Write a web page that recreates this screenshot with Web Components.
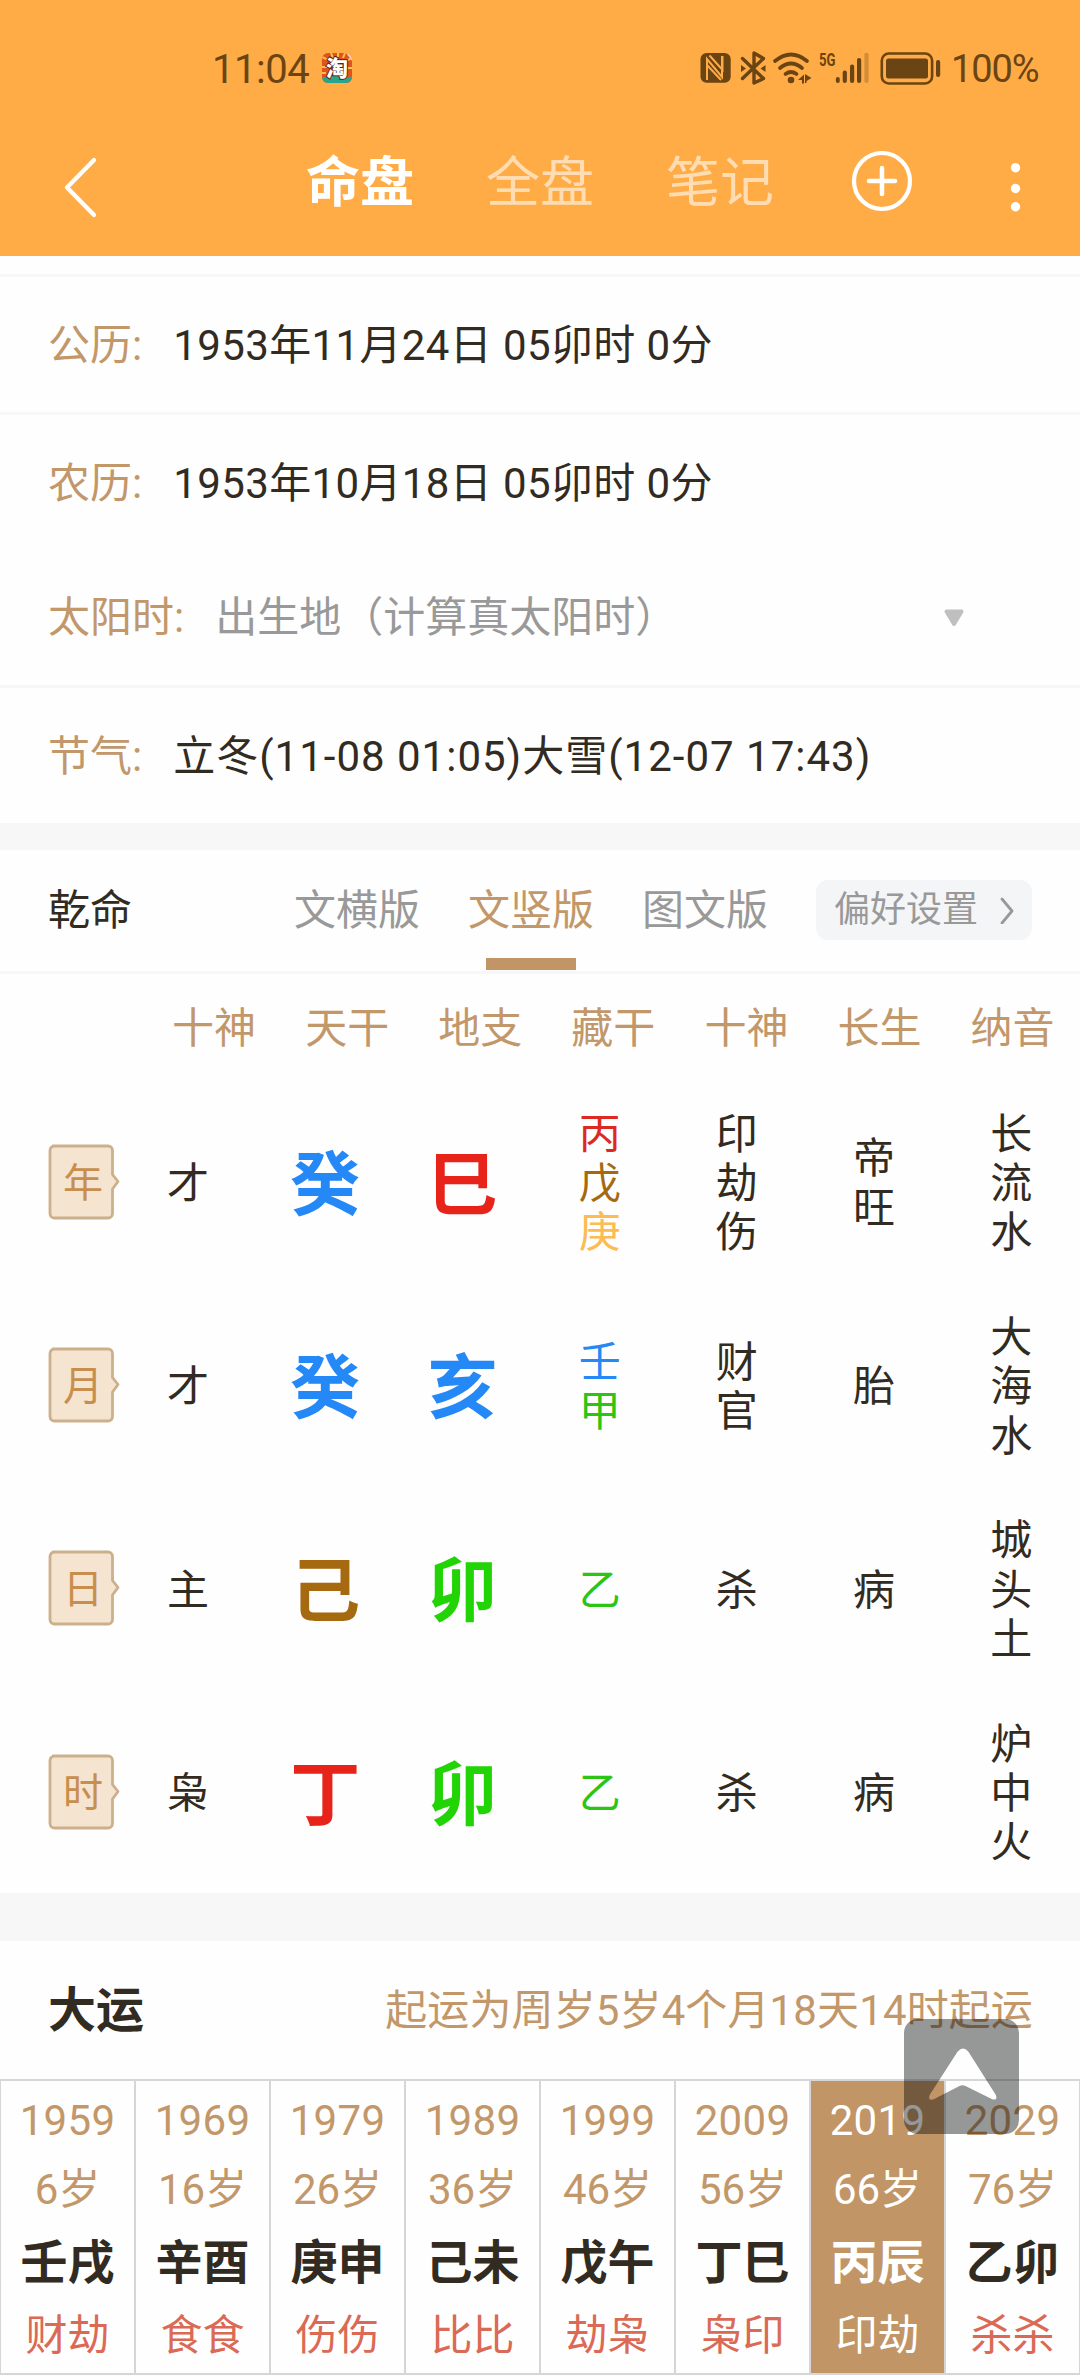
<!DOCTYPE html>
<html lang="zh-CN">
<head>
<meta charset="utf-8">
<title>命盘</title>
<style>
  html, body { margin: 0; padding: 0; }
  body {
    width: 1080px; height: 2376px; overflow: hidden; background: #fefefe;
    font-family: Roboto, "Noto Sans CJK SC", sans-serif; font-size: 42px; line-height: 50px;
    color: #322b22;
    --brown: #c2976a; --grey: #999;
  }
</style>
</head>
<body>
<chart-page></chart-page>

<script>
const define = (name, html, setup) => {
  const template = document.createElement('template');
  template.innerHTML = html;
  customElements.define(name, class extends HTMLElement {
    constructor() {
      super();
      this.attachShadow({ mode: 'open' }).append(template.content.cloneNode(true));
    }
    connectedCallback() { if (setup) setup(this, this.shadowRoot); }
  });
};

define('status-bar', `
<style>
  :host { display: flex; height: 112px; box-sizing: border-box; padding: 44px 42px 0 212px; align-items: flex-start; color: #6b4413; }
  .time { font-size: 40px; line-height: 51px; letter-spacing: -.5px; width: 110px; }
  .app { width: 30px; height: 30px; margin-top: 9px; overflow: visible; }
  .icons { margin-left: auto; width: 242px; height: 42px; margin-top: 4px; margin-right: 9px; overflow: visible; }
  .pct { font-size: 38px; line-height: 51px; letter-spacing: -1.1px; width: 87px; white-space: nowrap; }
</style>
<span class="time">11:04</span>
<svg class="app" viewBox="0 0 30 30">
  <defs><clipPath id="c"><rect width="30" height="30" rx="6"/></clipPath></defs>
  <g clip-path="url(#c)">
    <rect width="30" height="30" fill="#e2521f"/>
    <path d="M0 4l6 3M9 0l2 5M16 0v5M23 0l-2 5M30 5l-6 3M0 14h5M30 15h-5M0 20h4" stroke="#ffc04a" stroke-width="2"/>
    <path d="M24 0l6 8V0z" fill="#f7c7b0"/>
    <path d="M0 25q7-5 15-2t15 0v7H0z" fill="#2aa58d"/>
  </g>
  <text x="15" y="22.5" text-anchor="middle" font-size="22" font-weight="900" font-family="Noto Sans CJK SC" fill="#fff" stroke="#5a2410" stroke-width="2" paint-order="stroke">淘</text>
</svg>
<svg class="icons" viewBox="699 48 242 42" fill="#6b4413">
  <rect x="699.5" y="53" width="30.2" height="29.8" rx="6"/>
  <path d="M706 80V59l15 18V56M708.5 55.500l13 14.500V56M706 65l14 15" stroke="#ffac47" stroke-width="2" fill="none"/>
  <path d="M741.500 58.500l21 20L753 83V53l9.500 5.500-21 20" fill="none" stroke="#6b4413" stroke-width="3.400" stroke-linejoin="round" stroke-linecap="round"/>
  <path d="M740 65l5 3.500-5 3.500zM764.500 65l-5 3.500 5 3.500z"/>
  <g fill="none" stroke="#6b4413" stroke-width="3.700" stroke-linecap="round">
    <path d="M774 61q16-13 32 0"/><path d="M779 68q11-9 22 0"/><path d="M784.500 74q5.500-4 11 0"/>
  </g>
  <circle cx="790" cy="80" r="3.300"/>
  <path d="M797 80l6-5.500v9h-2V80zM804 74v9h1.500v-2l5-3z"/>
  <text x="818" y="66.300" font-size="18" font-weight="700" font-family="Roboto" textLength="16.500" lengthAdjust="spacingAndGlyphs">5G</text>
  <rect x="834.800" y="77" width="4" height="6" rx="2"/><rect x="841.700" y="70.500" width="4.200" height="12.500" rx="2"/>
  <rect x="849" y="64.500" width="4.200" height="18.500" rx="2"/><rect x="856" y="58" width="4.200" height="25" rx="2"/>
  <rect x="863.400" y="52.800" width="4.200" height="30.200" rx="2" opacity=".3"/>
  <rect x="880.800" y="53.500" width="50.300" height="30" rx="7" fill="none" stroke="#6b4413" stroke-width="2.600"/>
  <rect x="885" y="58.500" width="42" height="20" rx="2.500"/>
  <rect x="935" y="60" width="4.200" height="17" rx="2"/>
</svg>
<span class="pct">100%</span>`);

define('nav-bar', `
<style>
  :host { display: flex; height: 144px; align-items: center; color: #fff; }
  .back { width: 270px; height: 144px; }
  nav { display: flex; width: 540px; font-size: 54px; line-height: 148px; }
  nav span { width: 180px; text-align: center; color: rgba(255,255,255,.58); }
  nav .on { color: #fff; font-weight: 700; }
  .tools { width: 270px; height: 144px; }
</style>
<svg class="back" viewBox="0 112 270 144"><path d="M94 160L67 187.500 94 215" fill="none" stroke="#fff" stroke-width="4.300" stroke-linecap="round" stroke-linejoin="round"/></svg>
<nav><span class="on">命盘</span><span>全盘</span><span>笔记</span></nav>
<svg class="tools" viewBox="810 112 270 144" fill="#fff">
  <circle cx="882" cy="181" r="28" fill="none" stroke="#fff" stroke-width="4.200"/>
  <path d="M869 181h26M882 168v26" stroke="#fff" stroke-width="4.500" stroke-linecap="round"/>
  <circle cx="1015.500" cy="167.800" r="4.700"/><circle cx="1015.500" cy="188.500" r="4.700"/><circle cx="1015.500" cy="206.800" r="4.700"/>
</svg>`);

define('info-row', `
<style>
  :host { display: flex; box-sizing: border-box; align-items: center; padding: 2px 112px 0 48px; border-top: 3px solid #f7f7f7; white-space: nowrap; }
  .label { color: var(--brown); margin-right: 31px; }
  ::slotted(svg) { margin-left: auto; }
</style>
<span class="label"></span><slot></slot>`, (el, root) => {
  root.querySelector('.label').textContent = el.getAttribute('label');
});

define('view-tabs', `
<style>
  :host { display: flex; box-sizing: border-box; height: 124px; padding: 0 48px; border-bottom: 3px solid #f7f7f7; align-items: stretch; color: var(--grey); }
  .title { width: 222px; color: #322b22; line-height: 122px; }
  .tab { width: 174px; display: flex; flex-direction: column; align-items: center; line-height: 122px; height: 121px; }
  .on { color: var(--brown); }
  .on::after { content: ""; width: 90px; height: 12px; background: #c29567; margin-top: -14px; }
  .pref { display: flex; align-items: center; box-sizing: border-box; width: 216px; height: 60px; margin: 30px 0 0 24px; padding: 0 17px 1px 18px; border-radius: 12px; background: #f4f5f7; font-size: 36px; justify-content: space-between; }
</style>
<span class="title">乾命</span>
<span class="tab">文横版</span><span class="tab on">文竖版</span><span class="tab">图文版</span>
<span class="pref">偏好设置<svg width="16" height="28" viewBox="0 0 16 28"><path d="M3 3l10 12L3 27" fill="none" stroke="#999" stroke-width="2.800" stroke-linecap="round" stroke-linejoin="round"/></svg></span>`);

define('column-heads', `
<style>
  :host { display: grid; grid-template-columns: repeat(7, 133.1px); padding-left: 147.500px; height: 106px; line-height: 110px; text-align: center; color: var(--brown); }
</style><slot></slot>`);

define('pillar-row', `
<style>
  :host { display: grid; grid-template-columns: 119.500px repeat(7, 137.2px); height: 203.300px; align-items: center; justify-items: center; }
  .badge { justify-self: end; width: 72px; height: 76px; overflow: visible; }
  .big { font-size: 70px; font-weight: 700; line-height: 80px; margin-top: 8px; }
  .stack { width: 42px; line-height: 49.200px; word-break: break-all; margin-top: 4px; }
  .fire { color: #e7231a; } .water { color: #2489f7; } .wood { color: #22d406; } .earth { color: #a5690f; } .metal { color: #fcbc51; }
  .stack .fire { color: #dc2a22; } .stack .wood { color: #2bc516; }
</style>
<svg class="badge" viewBox="0 0 72 76">
  <path d="M5 2h55a4.500 4.500 0 0 1 4.500 4.500v24l5.500 7-5.500 7.500v24.500a4.500 4.500 0 0 1-4.500 4.500H6.500A4.500 4.500 0 0 1 2 69.500v-63A4.500 4.500 0 0 1 6.500 2z" fill="#f5e4d0" stroke="#ccb08c" stroke-width="2.800" stroke-linejoin="round"/>
  <text x="35" y="53" font-size="40" text-anchor="middle" font-family="Noto Sans CJK SC" fill="#c88e4d"></text>
</svg>`, (el, root) => {
  const element = {};
  Object.entries({ wood: '甲乙寅卯', fire: '丙丁巳午', earth: '戊己丑辰未戌', metal: '庚辛申酉', water: '壬癸子亥' })
    .forEach(([name, chars]) => [...chars].forEach(c => element[c] = name));
  const [name, god, stem, branch, hidden, gods, stage, sound] = el.getAttribute('data').split(',');
  root.querySelector('text').textContent = name;
  const add = (text, cls) => {
    const d = document.createElement('div');
    d.className = cls; d.textContent = text; root.append(d); return d;
  };
  add(god, 'stack');
  add(stem, 'big ' + element[stem]);
  add(branch, 'big ' + element[branch]);
  const box = add('', 'stack');
  for (const c of hidden) {
    const s = document.createElement('span');
    s.className = element[c]; s.textContent = c; box.append(s);
  }
  [gods, stage, sound].forEach(t => add(t, 'stack'));
});

define('luck-cell', `
<style>
  :host { display: flex; flex-direction: column; align-items: center; box-sizing: border-box; width: 135px; height: 296px; border: 1px solid #d6d6d6; border-width: 2px 1px; padding-top: 15px; color: var(--brown); white-space: nowrap; }
  :host([active]) { background: #c29567; background-clip: padding-box; color: #fff; }
  .age { margin-top: 19px; } .year { letter-spacing: .3px; }
  .pillar { font-size: 47px; font-weight: 700; color: #322b22; margin-top: 23px; }
  .gods { color: #da6a55; margin-top: 23px; }
  :host([active]) .pillar, :host([active]) .gods { color: #fff; }
</style>
<span class="year"></span><span class="age"></span><span class="pillar"></span><span class="gods"></span>`, (el, root) => {
  el.getAttribute('data').split(',').forEach((t, i) => root.querySelectorAll('span')[i].textContent = t);
});

define('back-to-top', `
<style>:host { position: absolute; left: 904px; top: 2019px; width: 115px; height: 115px; } svg { display: block; }</style>
<svg width="115" height="115" viewBox="0 0 116 116">
  <path fill-rule="evenodd" fill="rgba(2,5,6,.41)" d="M14 0h88a14 14 0 0 1 14 14v88a14 14 0 0 1-14 14H14a14 14 0 0 1-14-14V14A14 14 0 0 1 14 0zM54 33L26 76.500q-2.500 6.500 4 4.500l26-13.500q3-1.500 6 0L89 81q6 1.500 3.500-4.500L65 33q-5.500-6.500-11 0z"/>
</svg>`);

define('chart-page', `
<style>
  :host { display: flex; flex-direction: column; width: 1080px; height: 2376px; position: relative; }
  header { background: #ffac47; height: 256px; margin-bottom: 18px; }
  .band { background: #f7f7f7; }
  .luck { display: flex; justify-content: space-between; height: 138px; line-height: 140px; padding: 0 47px 0 48px; }
  .luck b { font-size: 48px; }
  .luck span { color: var(--brown); letter-spacing: .12px; }
  .cells { display: flex; }
  .date { letter-spacing: .38px; } .term { letter-spacing: 1px; } .place { color: var(--grey); }
</style>
<header><status-bar></status-bar><nav-bar></nav-bar></header>
<info-row label="公历:" style="height:138px"><span class="date">1953年11月24日 05卯时 0分</span></info-row>
<info-row label="农历:" style="height:138px"><span class="date">1953年10月18日 05卯时 0分</span></info-row>
<info-row label="太阳时:" style="height:135px;border-top:0;padding-top:1px"><span class="place">出生地（计算真太阳时）</span>
  <svg width="24" height="20" viewBox="0 0 24 20" style="margin-right:2px"><path d="M4.500 3.500h15L12 16z" fill="#bfbfbf" stroke="#bfbfbf" stroke-width="4" stroke-linejoin="round"/></svg></info-row>
<info-row label="节气:" style="height:138px"><span class="term">立冬(11-08 01:05)大雪(12-07 17:43)</span></info-row>
<div class="band" style="height:27px"></div>
<view-tabs></view-tabs>
<column-heads><span>十神</span><span>天干</span><span>地支</span><span>藏干</span><span>十神</span><span>长生</span><span>纳音</span></column-heads>
<pillar-row data="年,才,癸,巳,丙戊庚,印劫伤,帝旺,长流水"></pillar-row>
<pillar-row data="月,才,癸,亥,壬甲,财官,胎,大海水"></pillar-row>
<pillar-row data="日,主,己,卯,乙,杀,病,城头土"></pillar-row>
<pillar-row data="时,枭,丁,卯,乙,杀,病,炉中火"></pillar-row>
<div class="band" style="height:48px"></div>
<div class="luck"><b>大运</b><span>起运为周岁5岁4个月18天14时起运</span></div>
<div class="cells">
  <luck-cell data="1959,6岁,壬戌,财劫"></luck-cell>
  <luck-cell data="1969,16岁,辛酉,食食"></luck-cell>
  <luck-cell data="1979,26岁,庚申,伤伤"></luck-cell>
  <luck-cell data="1989,36岁,己未,比比"></luck-cell>
  <luck-cell data="1999,46岁,戊午,劫枭"></luck-cell>
  <luck-cell data="2009,56岁,丁巳,枭印"></luck-cell>
  <luck-cell active data="2019,66岁,丙辰,印劫"></luck-cell>
  <luck-cell data="2029,76岁,乙卯,杀杀"></luck-cell>
</div>
<back-to-top></back-to-top>`);
</script>
</body>
</html>
